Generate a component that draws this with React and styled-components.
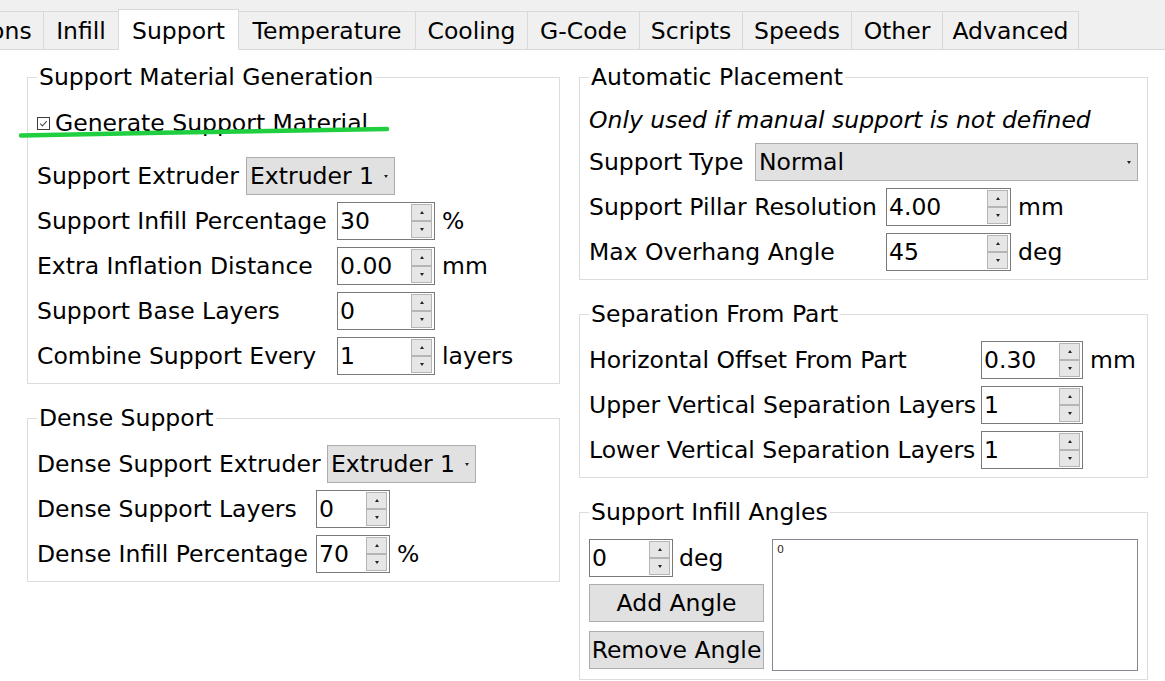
import React from "react";
import styled, { createGlobalStyle } from "styled-components";

const GlobalStyle = createGlobalStyle`
  html, body { margin: 0; padding: 0; background: #fff; }
  body {
    font-family: "DejaVu Sans", Verdana, sans-serif;
    font-size: 23.5px;
    color: #000;
  }
`;

const Window = styled.div`
  position: relative;
  width: 1165px;
  height: 681px;
  overflow: hidden;
  background: #fff;
  display: flex;
  flex-direction: column;
`;

const TabBar = styled.div`
  flex: none;
  height: 50px;
  box-sizing: border-box;
  background: #f0f0f0;
  border-bottom: 1px solid #d9d9d9;
  display: flex;
  align-items: flex-end;
`;

const TabStrip = styled.div`
  display: flex;
  align-items: flex-end;
  margin-left: ${(p) => p.$offset}px;
`;

const Tab = styled.div`
  flex: none;
  position: relative;
  z-index: ${(p) => (p.$active ? 1 : 0)};
  width: ${(p) => p.$w}px;
  height: ${(p) => (p.$active ? 41 : 38)}px;
  margin-bottom: ${(p) => (p.$active ? -1 : 0)}px;
  margin-left: -1px;
  box-sizing: border-box;
  border: 1px solid #d9d9d9;
  border-bottom: none;
  background: ${(p) => (p.$active ? "#fff" : "#f0f0f0")};
  display: flex;
  align-items: center;
  justify-content: center;
  padding-top: 1px;
  white-space: nowrap;
`;

const Content = styled.div`
  flex: 1;
  display: flex;
  align-items: flex-start;
  gap: 19px;
  padding: 13px 0 0 27px;
`;

const Column = styled.div`
  flex: none;
  width: ${(p) => p.$w}px;
  display: flex;
  flex-direction: column;
  gap: 20px;
`;

const Group = styled.fieldset`
  margin: 0;
  min-width: 0;
  box-sizing: border-box;
  border: 1px solid #dcdcdc;
  padding: 13px 9px 8px;
  display: flex;
  flex-direction: column;
  gap: 7px;
`;

const Legend = styled.legend`
  padding: 0 2px;
  line-height: 28px;
  white-space: nowrap;
`;

const CheckRow = styled.div`
  display: flex;
  align-items: center;
  gap: 5px;
  height: 38px;
  margin-bottom: 8px;
  white-space: nowrap;
`;

const CheckBox = styled.span`
  flex: none;
  width: 13px;
  height: 13px;
  box-sizing: border-box;
  border: 1px solid #3c3c3c;
  background: #fff;
  display: flex;
  align-items: center;
  justify-content: center;
`;

const NoteRow = styled.div`
  height: 32px;
  display: flex;
  align-items: center;
  font-style: italic;
  white-space: nowrap;
`;

const Row = styled.div`
  display: flex;
  align-items: center;
  gap: 6px;
  height: 38px;
  white-space: nowrap;
`;

const Label = styled.span`
  flex: none;
  ${(p) => (p.$w ? `min-width: ${p.$w}px;` : "")}
`;

const Grid = styled.div`
  display: grid;
  grid-template-columns: ${(p) => p.$label}px auto auto;
  grid-auto-rows: 38px;
  justify-content: start;
  align-items: center;
  column-gap: 6px;
  row-gap: 7px;
  white-space: nowrap;
`;

const Unit = styled.span`
  padding-left: 1px;
`;

const Combo = styled.div`
  ${(p) => (p.$stretch ? "flex: 1;" : `width: ${p.$w}px; flex: none;`)}
  height: 38px;
  box-sizing: border-box;
  background: #e1e1e1;
  border: 1px solid #adadad;
  display: flex;
  align-items: center;
  justify-content: space-between;
  padding: 0 6px 0 3px;
`;

const DownArrow = styled.span`
  width: 0;
  height: 0;
  border-left: 2.5px solid transparent;
  border-right: 2.5px solid transparent;
  border-top: 3px solid #222;
`;

const UpArrow = styled.span`
  width: 0;
  height: 0;
  border-left: 2.5px solid transparent;
  border-right: 2.5px solid transparent;
  border-bottom: 3px solid #222;
`;

const SpinFrame = styled.div`
  flex: none;
  width: ${(p) => p.$w}px;
  height: 38px;
  box-sizing: border-box;
  border: 1px solid #7a7a7a;
  background: #fff;
  display: flex;
  align-items: stretch;
  padding: 1px 2px 1px 0;
`;

const SpinValue = styled.div`
  flex: 1;
  display: flex;
  align-items: center;
  padding-left: 2px;
`;

const SpinButtons = styled.div`
  flex: none;
  width: 21px;
  display: flex;
  flex-direction: column;
`;

const SpinButton = styled.div`
  flex: 1;
  box-sizing: border-box;
  background: #e6e6e6;
  border: 1px solid #b5b5b5;
  display: flex;
  align-items: center;
  justify-content: center;
`;

const AnglesBody = styled.div`
  display: flex;
  gap: 8px;
`;

const AngleControls = styled.div`
  flex: none;
  width: 175px;
  display: flex;
  flex-direction: column;
  gap: 7px;
`;

const Button = styled.div`
  height: 38px;
  box-sizing: border-box;
  background: #e1e1e1;
  border: 1px solid #adadad;
  display: flex;
  align-items: center;
  justify-content: center;
  white-space: nowrap;
  margin-top: ${(p) => p.$mt || 0}px;
`;

const ListBox = styled.div`
  flex: 1;
  height: 132px;
  box-sizing: border-box;
  border: 1px solid #828790;
  background: #fff;
  padding: 3px 4px;
`;

const ListItem = styled.div`
  font-size: 11px;
  line-height: 13px;
  color: #3a2a10;
`;

const Annotation = styled.svg`
  position: absolute;
  left: 0;
  top: 0;
  pointer-events: none;
`;

function Spin({ value, w }) {
  return (
    <SpinFrame $w={w}>
      <SpinValue>{value}</SpinValue>
      <SpinButtons>
        <SpinButton>
          <UpArrow />
        </SpinButton>
        <SpinButton>
          <DownArrow />
        </SpinButton>
      </SpinButtons>
    </SpinFrame>
  );
}

function Select({ value, w, stretch }) {
  return (
    <Combo $w={w} $stretch={stretch}>
      <span>{value}</span>
      <DownArrow />
    </Combo>
  );
}

function FieldRows({ rows, w, label }) {
  return (
    <Grid $label={label}>
      {rows.map(([text, value, unit]) => (
        <React.Fragment key={text}>
          <span>{text}</span>
          <Spin value={value} w={w} />
          <Unit>{unit || ""}</Unit>
        </React.Fragment>
      ))}
    </Grid>
  );
}

const tabs = [
  ["Additions", 134],
  ["Infill", 76],
  ["Support", 121],
  ["Temperature", 178],
  ["Cooling", 113],
  ["G-Code", 113],
  ["Scripts", 104],
  ["Speeds", 110],
  ["Other", 92],
  ["Advanced", 137],
];

export default function App() {
  return (
    <>
      <GlobalStyle />
      <Window>
        <TabBar>
          <TabStrip $offset={-89}>
            {tabs.map(([name, w]) => (
              <Tab key={name} $w={w} $active={name === "Support"}>
                {name}
              </Tab>
            ))}
          </TabStrip>
        </TabBar>
        <Content>
          <Column $w={533}>
            <Group>
              <Legend>Support Material Generation</Legend>
              <CheckRow>
                <CheckBox>
                  <svg width="11" height="11" viewBox="0 0 11 11">
                    <path
                      d="M2.2 5.6 L4.4 7.8 L8.8 3.2"
                      fill="none"
                      stroke="#555"
                      strokeWidth="1.2"
                    />
                  </svg>
                </CheckBox>
                <span>Generate Support Material</span>
              </CheckRow>
              <Row>
                <Label $w={203}>Support Extruder</Label>
                <Select value="Extruder 1" w={149} />
              </Row>
              <FieldRows
                w={98}
                label={294}
                rows={[
                  ["Support Infill Percentage", "30", "%"],
                  ["Extra Inflation Distance", "0.00", "mm"],
                  ["Support Base Layers", "0"],
                  ["Combine Support Every", "1", "layers"],
                ]}
              />
            </Group>
            <Group>
              <Legend>Dense Support</Legend>
              <Row>
                <Label $w={284}>Dense Support Extruder</Label>
                <Select value="Extruder 1" w={149} />
              </Row>
              <FieldRows
                w={74}
                label={273}
                rows={[
                  ["Dense Support Layers", "0"],
                  ["Dense Infill Percentage", "70", "%"],
                ]}
              />
            </Group>
          </Column>
          <Column $w={569}>
            <Group>
              <Legend>Automatic Placement</Legend>
              <NoteRow>Only used if manual support is not defined</NoteRow>
              <Row>
                <Label $w={160}>Support Type</Label>
                <Select value="Normal" stretch />
              </Row>
              <FieldRows
                w={125}
                label={291}
                rows={[
                  ["Support Pillar Resolution", "4.00", "mm"],
                  ["Max Overhang Angle", "45", "deg"],
                ]}
              />
            </Group>
            <Group>
              <Legend>Separation From Part</Legend>
              <FieldRows
                w={102}
                label={386}
                rows={[
                  ["Horizontal Offset From Part", "0.30", "mm"],
                  ["Upper Vertical Separation Layers", "1"],
                  ["Lower Vertical Separation Layers", "1"],
                ]}
              />
            </Group>
            <Group>
              <Legend>Support Infill Angles</Legend>
              <AnglesBody>
                <AngleControls>
                  <Row>
                    <Spin value="0" w={84} />
                    <span>deg</span>
                  </Row>
                  <Button>Add Angle</Button>
                  <Button $mt={2}>Remove Angle</Button>
                </AngleControls>
                <ListBox>
                  <ListItem>0</ListItem>
                </ListBox>
              </AnglesBody>
            </Group>
          </Column>
        </Content>
        <Annotation width="420" height="160" viewBox="0 0 420 160">
          <path
            d="M21 135.5 C 140 133, 290 130.5, 387 129"
            fill="none"
            stroke="#1fcf3f"
            strokeWidth="4.5"
            strokeLinecap="round"
          />
        </Annotation>
      </Window>
    </>
  );
}
